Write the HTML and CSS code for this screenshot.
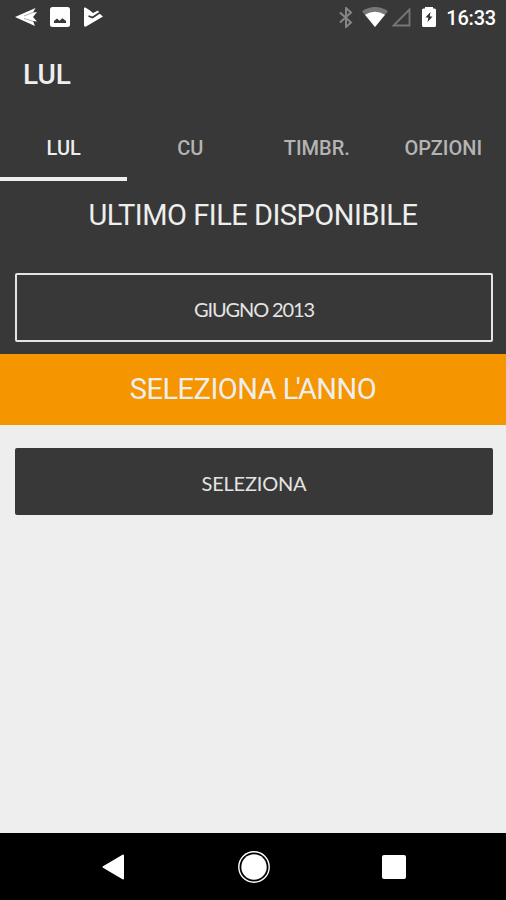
FILE: index.html
```html
<!DOCTYPE html>
<html lang="it">
<head>
  <meta charset="UTF-8">
  <meta name="viewport" content="width=device-width, initial-scale=1">
  <title>LUL</title>
  <link rel="stylesheet" href="styles.css">
</head>
<body>

  <header>
    <div class="status-bar">
      <div class="notifiche">
        <svg width="22" height="20" viewBox="0 0 22 20"><path d="M0 10 20.5 1 18 5.5 22 5 18 10 22 14.5 18 14 20 19Z" fill="#fff"/><path d="M9 9 19 5M9 11.5 18 14.2" stroke="#999" stroke-width=".8"/></svg>
        <svg width="20" height="20" viewBox="0 0 20 20"><rect width="20" height="20" rx="2.5" fill="#fff"/><path d="M4 16V14L7 11.5 9.5 13.8 12.5 11.2 16 14V16Z" fill="#383838"/></svg>
        <svg width="20" height="20" viewBox="0 0 20 20"><path d="M1 1.5Q1 0 2.5.5L7 3.5 10 6 15 3.5 17 7 20 9.5 3 19.5Q1 20 1 18.5Z" fill="#fff"/><path d="M5.5 9 9.5 10.5 17 5.5" fill="none" stroke="#383838" stroke-width="1.8"/></svg>
      </div>
      <div class="sistema">
        <svg class="bluetooth" width="14" height="21" viewBox="0 0 14 21"><path d="M1 5.5 12 15.5 7 20V1L12 5.5 1 15.5" fill="none" stroke="#858585" stroke-width="2"/></svg>
        <svg class="wifi" width="26" height="20" viewBox="0 0 26 20"><path d="M0 4.2Q13-4.2 26 4.2L13 20Z" fill="#777"/><path d="M3 7.8Q13 1.8 23 7.8L13 20Z" fill="#fff"/></svg>
        <svg class="segnale" width="20" height="20" viewBox="0 0 20 20"><path d="M18.5 2.5V18.5H2.5Z" fill="none" stroke="#777" stroke-width="1.8"/></svg>
        <svg class="batteria" width="14" height="20" viewBox="0 0 14 20"><path d="M3 0H11V1.5H12.5Q14 1.5 14 3V18.5Q14 20 12.5 20H1.5Q0 20 0 18.5V3Q0 1.5 1.5 1.5H3Z" fill="#fff"/><path d="M8.5 5 3.5 10.5H6.5L5.5 15 10.5 9.5H7.7Z" fill="#282828"/></svg>
        <span class="ora">16:33</span>
      </div>
    </div>
    <h1>LUL</h1>
    <nav>
      <a class="tab attivo">LUL</a>
      <a class="tab">CU</a>
      <a class="tab">TIMBR.</a>
      <a class="tab">OPZIONI</a>
    </nav>
  </header>

  <section class="ultimo">
    <h2>ULTIMO FILE DISPONIBILE</h2>
    <button class="bordo">GIUGNO 2013</button>
  </section>

  <section class="anno">
    <h2>SELEZIONA <span class="apostrofo">L'</span>ANNO</h2>
  </section>

  <main>
    <button class="seleziona">SELEZIONA</button>
  </main>

  <footer>
    <svg width="24" height="28" viewBox="0 0 24 28"><path d="M22 2.5V25.5L2.5 14Z" fill="#fff" stroke="#fff" stroke-width="2" stroke-linejoin="round"/></svg>
    <svg width="32" height="32" viewBox="0 0 32 32"><circle cx="16" cy="16" r="15.2" fill="none" stroke="#fff" stroke-width="1.4"/><circle cx="16" cy="16" r="12.7" fill="#fff"/></svg>
    <svg width="24" height="24" viewBox="0 0 24 24"><rect width="24" height="24" rx="2" fill="#fff"/></svg>
  </footer>

</body>
</html>
```

FILE: styles.css
```css
* {
  box-sizing: border-box;
}

body {
  font-family: Roboto, sans-serif;
  margin: 0;
  height: 900px;
  display: flex;
  flex-direction: column;
  background-color: #eeeeee;
  color: #eeeeee;
}

svg {
  display: block;
}

header {
  height: 181px;
  background-color: #383838;
}

.status-bar {
  display: flex;
  justify-content: space-between;
  height: 36px;
  padding: 7px 10px 0 15px;
}

.notifiche {
  display: flex;
  gap: 13px;
}

.sistema {
  display: flex;
}

.wifi {
  margin-left: 9px;
}

.segnale {
  margin-left: 3px;
}

.batteria {
  margin-left: 11px;
}

.ora {
  margin-left: 10px;
  font-size: 20px;
  font-weight: 500;
  line-height: 22px;
  letter-spacing: -0.2px;
  color: #fff;
}

h1 {
  margin: 0;
  padding-left: 23px;
  font-size: 28px;
  font-weight: 500;
  line-height: 77px;
}

nav {
  display: flex;
}

.tab {
  flex: 1;
  height: 68px;
  padding-left: 1px;
  border-bottom: 4px solid transparent;
  text-align: center;
  font-size: 20px;
  font-weight: 500;
  line-height: 70px;
  color: #b4b4b4;
}

.attivo {
  color: #eeeeee;
  border-color: #eeeeee;
}

h2 {
  margin: 0;
  text-align: center;
  font-size: 29px;
  font-weight: 400;
  line-height: 68px;
  letter-spacing: -0.5px;
}

button {
  display: block;
  width: 478px;
  margin: 0 13px 0 15px;
  padding: 2px 0 0;
  border: none;
  border-radius: 2px;
  background-color: #383838;
  color: #e4e4e4;
  font-family: Lato, sans-serif;
  font-size: 20px;
  letter-spacing: -0.2px;
}

.ultimo {
  height: 173px;
  background-color: #383838;
}

.bordo {
  height: 69px;
  margin-top: 24px;
  border: 2px solid #e4e4e4;
  letter-spacing: -1.1px;
}

.anno {
  height: 71px;
  background-color: #f59500;
}

.anno h2 {
  line-height: 70px;
}

.apostrofo {
  letter-spacing: -2.8px;
}

main {
  flex: 1;
  padding-top: 23px;
}

.seleziona {
  height: 67px;
}

footer {
  display: flex;
  align-items: center;
  justify-content: space-between;
  height: 67px;
  padding: 0 100px 0 101px;
  background-color: #000;
}
```
